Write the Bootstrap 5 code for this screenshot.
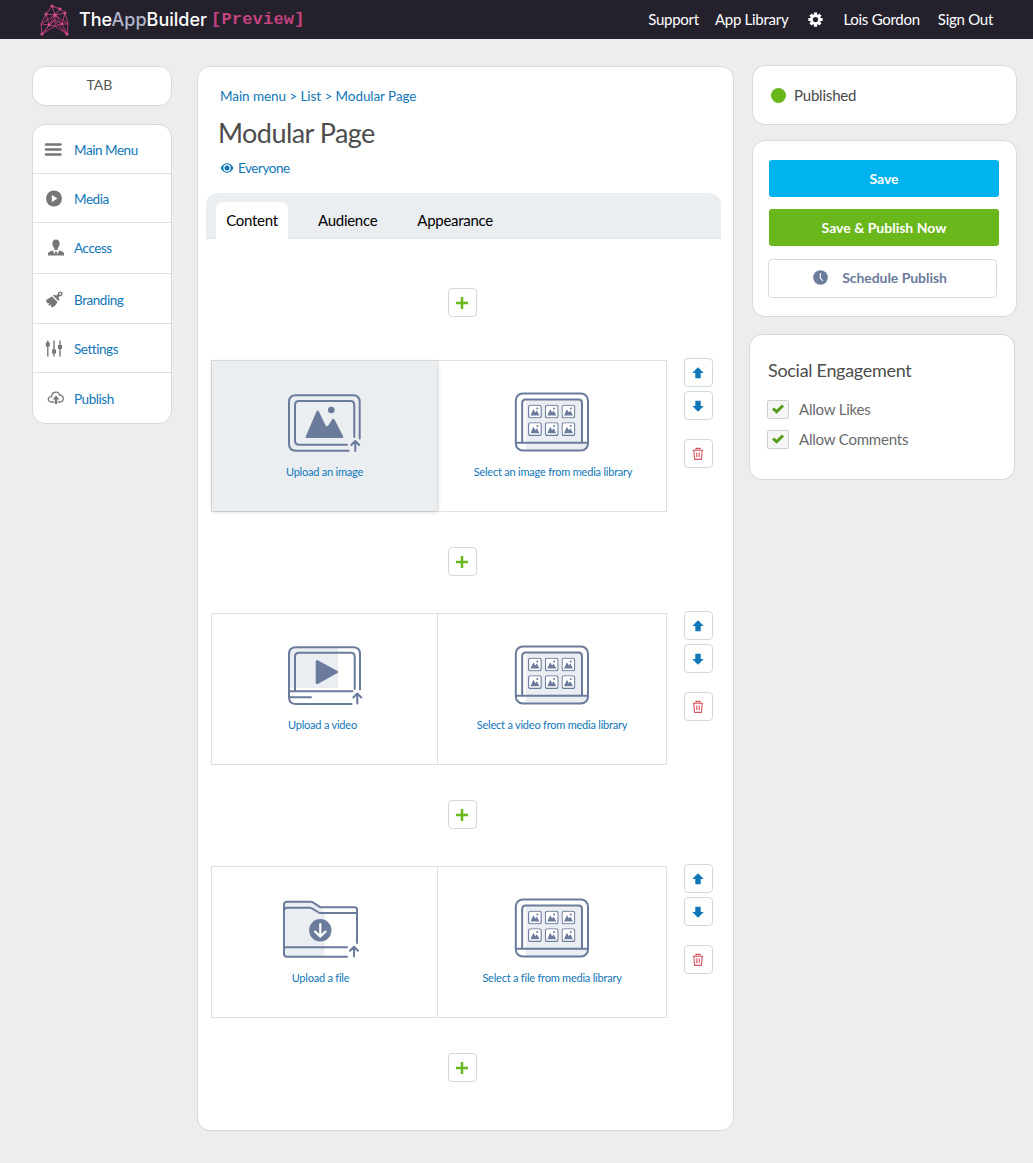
<!DOCTYPE html>
<html lang="en">
<head>
<meta charset="utf-8">
<meta name="viewport" content="width=device-width, initial-scale=1">
<title>TheAppBuilder</title>
<link href="https://cdn.jsdelivr.net/npm/bootstrap@5.3.0/dist/css/bootstrap.min.css" rel="stylesheet">
<style>
body{background:#ededed;font-family:Lato,"Liberation Sans",sans-serif;font-size:14px;line-height:20px;color:#4a4a4a;min-height:1163px}
a{text-decoration:none;color:#0f76b8}
.topbar{height:39px;background:#24212d;padding:0 40px}
.topbar a{color:#fff;font-size:15px;line-height:20px;letter-spacing:-.27px}
.topnav{margin-top:-1px}
.gear{margin:0 20px}
.brandname{font-family:Inter,sans-serif;font-weight:500;font-size:18px;letter-spacing:0;color:#fff;margin-left:9px;width:128px;white-space:nowrap}
.brandname i{font-style:normal;color:#b3b6ca}
.previewtag{font-family:"Liberation Mono",monospace;font-weight:700;font-size:17px;color:#c8427f;margin-left:4px;letter-spacing:.2px}
.panel{background:#fff;border:1px solid #d9d9d9;border-radius:13px}
.workspace{padding:26px 16px 0 32px}
.side{width:140px}
.tabcard{height:40px;padding:0 5px 2px 0;margin-top:1px;margin-bottom:18px;color:#555}
.menu{height:300px;overflow:hidden}
.menu a{display:flex;align-items:center;height:49px;padding:2px 0 0 11px;border-bottom:1px solid #dfdfdf;font-size:13.5px;letter-spacing:-.45px}
.menu a svg{width:22px;height:20px;margin-right:8px}
.menu a:nth-child(3){height:51px;padding-top:0}
.menu a:nth-child(4){height:50px}
.menu a:last-child{border:0;height:50px;padding-top:1px}
.editor{width:537px;height:1065px;margin-left:25px;margin-top:1px}
.crumbs{padding:19px 0 0 22px;font-size:13.5px;letter-spacing:-.07px}
.pagetitle{font-size:27px;line-height:34px;font-weight:400;margin:10px 0 0 20px;color:#4d4d4d;letter-spacing:-.55px}
.audience{margin:8px 0 0 22px;font-size:13.5px;letter-spacing:-.45px}
.tabstrip{height:46px;margin:15px 12px 0 8px;background:#ebeef1;border-radius:12px 12px 0 0;border-bottom:1px solid #e0e3e6;padding:9px 0 0 10px}
.tabstrip a{color:#000;font-size:15px;height:37px;line-height:37px;letter-spacing:-.28px}
.tabstrip .current{background:#fff;border-radius:7px 7px 0 0;width:72px;text-align:center;margin-right:30px}
.sq{width:29px;height:29px;border:1px solid #d3d7df;border-radius:4px;background:#fff;padding:0 1px 0 0;display:flex;align-items:center;justify-content:center}
.adder{margin:35px 0 37px 250px}
.adder.first{margin-top:49px;margin-bottom:43px}
.module{height:152px;margin-left:13px}
.choices{width:456px;height:152px;border:1px solid #e0e0e0}
.choice{padding-top:30px;font-size:11px;line-height:16px;text-align:center;letter-spacing:-.22px}
.choice svg{height:64px;display:block;margin:0 auto 9px}
.choice.up{width:226px;border-right:1px solid #e0e0e0}
.choice.up svg{width:77px}.choice.lib svg{width:78px}
.choice.lib.picklib span{margin-left:2px}
.choice.picked{background:#eaeef1;box-shadow:0 1px 4px rgba(0,0,0,.16)}
.choice.shift{padding-right:8px}
.choice.vid span{margin-right:4px}
.tools{margin:-2px 0 0 17px}
.tools .sq{margin-bottom:4px}.tools .sq:last-child{margin-top:19px}
.right{width:265px;margin-left:18px}
.status{height:60px;padding-left:18px;font-size:15px;color:#484848;margin-bottom:15px;letter-spacing:-.2px}
.status i{width:15px;height:15px;border-radius:50%;background:#6ab71c;margin-right:8px}
.actions{height:177px;padding:19px 17px 0 15px;margin-bottom:17px}
.actions .btn{display:flex;align-items:center;justify-content:center;font-size:14px;font-weight:700;border-radius:3px;padding:0;width:230px;height:37px;border:0;color:#fff;margin-left:1px;margin-bottom:12px}
.actions .save{background:#00b3ee}.actions .pub{background:#6ab71c;padding-bottom:1px}
.actions .sched{height:39px;width:229px;margin-left:0;border:1px solid #d7dae2;color:#6b7b9c;background:#fff;border-radius:4px;margin-top:13px;padding:0 5px 2px 0;letter-spacing:-.05px}
.social{width:266px;height:146px;margin-left:-3px;padding:24px 0 0 17px}
.social h2{font-size:18px;line-height:22px;font-weight:400;margin:0 0 18px 1px;color:#4d4d4d;letter-spacing:-.3px}
.opt{height:20px;margin-bottom:10px;font-size:15px;color:#6a6a6e}
.opt b{width:22px;height:19px;border:1px solid #cfcfcf;background:#f5f5f5;border-radius:2px;margin-right:10px;display:flex;align-items:center;justify-content:center}
.opt span{letter-spacing:-.2px}
.ln{fill:none;stroke:#6b7b9c;stroke-width:2;stroke-linecap:round;stroke-linejoin:round}
.sl{fill:#6b7b9c}.tint{fill:#eaedf1}
</style>
</head>
<body>
<svg width="0" height="0" class="position-absolute">
<symbol id="thumb" viewBox="0 0 14 14"><rect x=".6" y=".6" width="12.6" height="12.6" rx="2" fill="#fff" stroke="#6b7b9c" stroke-width="1.1"/><path d="M2.500 11 5.400 4.600 7.300 8 8.800 6 11.500 11z" fill="#6b7b9c"/><circle cx="9.300" cy="3.900" r="1" fill="#6b7b9c"/></symbol>
<symbol id="library" viewBox="0 0 78 64"><path class="tint" d="M13 9h56v42h6v3q-1 5-6 5H13z"/><rect class="ln" x="2.800" y="2.500" width="72.200" height="57" rx="7"/><path class="ln" d="M9.200 51V12q0-3.500 3.500-3.500h53Q69 8.500 69 12v39M3 51.700h72"/><use href="#thumb" x="15" y="13.600" width="14" height="14"/><use href="#thumb" x="31.800" y="13.600" width="14" height="14"/><use href="#thumb" x="48.500" y="13.600" width="14" height="14"/><use href="#thumb" x="15" y="31.200" width="14" height="14"/><use href="#thumb" x="31.800" y="31.200" width="14" height="14"/><use href="#thumb" x="48.500" y="31.200" width="14" height="14"/></symbol>
<symbol id="up" viewBox="0 0 14 14"><path d="M7 1.300 12.700 7H9.700v5.200H4.300V7H1.300z" fill="#0f76b8"/></symbol>
<symbol id="plus" viewBox="0 0 14 14"><path d="M7 1v12M1 7h12" stroke="#6ab71c" stroke-width="2.500" fill="none"/></symbol>
<symbol id="bin" viewBox="0 0 12 14"><path d="M.8 3.300h10.400M4 3V1.400h4V3M1.800 3.500l.8 8.900h6.800l.8-8.900M4.800 5.500v4.700M7.200 5.500v4.700" fill="none" stroke="#d9545f" stroke-width="1.100"/></symbol>
<symbol id="tick" viewBox="0 0 14 12"><path d="M2 5.500l3.600 3.300L12 2.500" fill="none" stroke="#559c1c" stroke-width="3"/></symbol>
</svg>

<header class="topbar d-flex align-items-center">
<svg width="30" height="32" viewBox="0 0 30 32" fill="none" stroke="#b73a75" stroke-width="1" class="mt-n1"><path d="M12 2 6 10 1 20 2 30 15 22 27 30 28 20 25 9 20 5zM12 2l3 9-9-1M20 5l-5 6 10-2M6 10l3 11 6-10 7 9 3-11M15 11v11M1 20l8 1 6 1 7-2 6 0M9 21 2 30M22 20l5 10M1 20l14-9 13 9M2 30l12-14 13 14M12 2l8 3M9 21l6-5 7 4"/><g fill="#d9528d" stroke="none"><circle cx="12" cy="2" r="1.500"/><circle cx="20" cy="5" r="1.500"/><circle cx="6" cy="10" r="1.500"/><circle cx="15" cy="11" r="1.700"/><circle cx="25" cy="9" r="1.400"/><circle cx="2" cy="30" r="1.600"/><circle cx="27" cy="30" r="1.600"/><circle cx="9" cy="21" r="1.300"/><circle cx="22" cy="20" r="1.300"/></g></svg>
<span class="brandname">The<i>App</i>Builder</span><span class="previewtag">[Preview]</span>
<nav class="topnav d-flex align-items-center ms-auto"><a href="#">Support</a><a href="#" class="ms-3">App Library</a>
<a href="#" class="gear d-flex"><svg width="15" height="15" viewBox="-8 -8 16 16"><g stroke="#fff" stroke-width="3.400"><path d="M0-7.600V7.600M-7.600 0H7.600M-5.300-5.300 5.300 5.300M5.300-5.300-5.300 5.300"/></g><circle r="4.200" fill="#24212d" stroke="#fff" stroke-width="2.800"/></svg></a>
<a href="#">Lois Gordon</a><a href="#" style="margin-left:18px">Sign Out</a></nav>
</header>

<main class="workspace d-flex align-items-start">
<aside class="side">
<div class="panel tabcard d-flex align-items-center justify-content-center">TAB</div>
<nav class="panel menu">
<a href="#"><svg viewBox="0 0 22 20"><path d="M2 4.500h14.500M2 9.500h14.500M2 14.500h14.500" stroke="#777" stroke-width="2.500" stroke-linecap="round"/></svg>Main Menu</a>
<a href="#"><svg viewBox="0 0 22 20"><circle cx="10" cy="9.500" r="8" fill="#777"/><path d="M7.800 6v7l5.700-3.500z" fill="#fff"/></svg>Media</a>
<a href="#"><svg viewBox="0 0 22 20"><g fill="#777"><path d="M12 1.500c4.500 0 4.500 6 1.700 8.600v2h-3.400v-2C7.500 7.500 7.500 1.500 12 1.500z"/><path d="M4 17.500v-2.300q.5-1.500 5-2.700l2 5zM20 17.500v-2.300q-.5-1.500-5-2.700l-2 5zM11.200 13.500h1.600l.8 4h-3.200z"/></g></svg>Access</a>
<a href="#"><svg viewBox="0 0 22 20"><path d="m2 10 6-3.500 5.500 5.500q-1 3-5 5.500l-1.700-1 .5-2-2 1.200-1-1.200.8-1.500-2 .2z" fill="#777"/><path d="m9 5.600 1.700-1.100 4.800 4.800-1 1.800z" fill="#777"/><path d="m12.500 7.500 3.500-3.700" stroke="#777" stroke-width="3"/><circle cx="16.300" cy="3.800" r="1.700" fill="#fff" stroke="#777" stroke-width="1.400"/></svg>Branding</a>
<a href="#"><svg viewBox="0 0 22 20"><path d="M3.800 1.500v16M10 1.500v16M16 1.500v16" stroke="#777" stroke-width="1.400"/><path d="M1.800 3.500h4v4h-4zM8 10.500h4v4H8zM14 6h4v4h-4z" fill="#777"/></svg>Settings</a>
<a href="#"><svg viewBox="0 0 22 20"><path d="M10 13H7.500C3 13 3.500 7.500 7.500 7.700 8 2 15 2 15.500 6.200c5-.5 5 6.800.5 6.800h-2" fill="none" stroke="#777" stroke-width="1.300"/><path d="M12 6.500l3.500 4h-2.300V15h-2.400v-4.500H8.500z" fill="#777"/></svg>Publish</a>
</nav>
</aside>

<section class="panel editor">
<nav class="crumbs"><a href="#">Main menu &gt; List &gt; Modular Page</a></nav>
<h1 class="pagetitle">Modular Page</h1>
<div class="audience"><a href="#" class="d-flex align-items-center"><svg width="14" height="12" viewBox="0 0 14 12" class="me-1"><path d="M.5 6C3.500-.4 10.500-.4 13.500 6c-3 6.400-10 6.400-13 0z" fill="#0f76b8"/><circle cx="7" cy="6" r="3.700" fill="#fff"/><circle cx="7" cy="6" r="2.500" fill="#0f76b8"/></svg>Everyone</a></div>
<nav class="tabstrip d-flex"><a href="#" class="current">Content</a><a href="#">Audience</a><a href="#" style="margin-left:40px">Appearance</a></nav>

<button class="sq adder first"><svg width="14" height="14"><use href="#plus"/></svg></button>
<div class="module d-flex">
<div class="choices d-flex">
<a href="#" class="choice up picked"><svg viewBox="0 0 77 64"><path class="ln" d="M73.700 47.500V11q0-6.700-6.700-6.700H10Q3 4.300 3 11v42q0 6.700 7 6.700h52.500"/><path class="ln" d="M68.300 46V14q0-4-4-4H13q-4 0-4 4v35.700q0 4 4 4h48"/><path class="sl" d="M20.500 47q-1.500-.2-.7-1.700L30.500 20.500q1.200-2 2.400 0L39.500 34.200q1.500 2 3 0l3.500-5.600q1.300-1.500 2.500 0l8.600 16.700q.5 1.600-.8 1.700z"/><circle class="sl" cx="45.300" cy="19" r="3.300"/><path class="ln" d="M69.300 60V50M65.300 54l4-4 4 4"/></svg><span>Upload an image</span></a>
<a href="#" class="choice lib picklib flex-fill"><svg><use href="#library"/></svg><span>Select an image from media library</span></a>
</div>
<div class="tools"><button class="sq"><svg width="14" height="14"><use href="#up"/></svg></button><button class="sq"><svg width="14" height="14" style="transform:rotate(180deg)"><use href="#up"/></svg></button><button class="sq"><svg width="12" height="14"><use href="#bin"/></svg></button></div>
</div>

<button class="sq adder"><svg width="14" height="14"><use href="#plus"/></svg></button>
<div class="module d-flex">
<div class="choices d-flex">
<a href="#" class="choice up vid"><svg viewBox="0 0 77 64"><path class="tint" d="M3 4h49v40H3z"/><path class="ln" d="M74 45.500V10q0-6.700-6.700-6.700H10Q3 3.300 3 10v43q0 7 7 7h55.500M3 47.300h63.500M9 47V12.500q0-3.800 4-3.800h51.700q4 0 4 3.800V45M3 53.300h22"/><path class="sl" d="M29.700 17.500q.3-1.800 2-1.200L51.500 27q1.200 1 0 2L31.700 40q-1.700.5-2-1.200z"/><path class="ln" d="M71.300 59.500V49.500M67.300 53.500l4-4 4 4"/></svg><span>Upload a video</span></a>
<a href="#" class="choice lib flex-fill"><svg><use href="#library"/></svg><span>Select a video from media library</span></a>
</div>
<div class="tools"><button class="sq"><svg width="14" height="14"><use href="#up"/></svg></button><button class="sq"><svg width="14" height="14" style="transform:rotate(180deg)"><use href="#up"/></svg></button><button class="sq"><svg width="12" height="14"><use href="#bin"/></svg></button></div>
</div>

<button class="sq adder"><svg width="14" height="14"><use href="#plus"/></svg></button>
<div class="module d-flex">
<div class="choices d-flex">
<a href="#" class="choice up shift"><svg viewBox="0 0 77 64"><path class="tint" d="M2 5h27l10 6 3.700 5v40q0 3-3 3.500H2z"/><path class="ln" d="M75 46V12.500q0-2.200-2.200-2.200H38.500L30.500 5.200Q29.700 4.700 28.500 4.700H5q-3 0-3 3v49q0 3 3 3h60M2 13.500q0-2.800 3-2.800h22.500q1.300 0 2 .5L37.500 16H75M2 50.300h63"/><circle class="sl" cx="38.300" cy="33.300" r="11.200"/><path d="M38.300 27v12M33 34.500l5.300 5 5.300-5" fill="none" stroke="#fff" stroke-width="2.200" stroke-linecap="round"/><path class="ln" d="M72 59.500V49.700M68 53.700l4-4 4 4"/></svg><span>Upload a file</span></a>
<a href="#" class="choice lib flex-fill"><svg><use href="#library"/></svg><span>Select a file from media library</span></a>
</div>
<div class="tools"><button class="sq"><svg width="14" height="14"><use href="#up"/></svg></button><button class="sq"><svg width="14" height="14" style="transform:rotate(180deg)"><use href="#up"/></svg></button><button class="sq"><svg width="12" height="14"><use href="#bin"/></svg></button></div>
</div>
<button class="sq adder"><svg width="14" height="14"><use href="#plus"/></svg></button>
</section>

<aside class="right">
<div class="panel status d-flex align-items-center"><i></i>Published</div>
<div class="panel actions">
<button class="btn save">Save</button>
<button class="btn pub">Save &amp; Publish Now</button>
<button class="btn sched"><svg width="15" height="15" viewBox="0 0 15 15" style="margin-right:14px"><circle cx="7.500" cy="7.500" r="7.300" fill="#6b7b9c"/><path d="M7.300 3v5l2.700 3" fill="none" stroke="#fff" stroke-width="1.100"/></svg>Schedule Publish</button>
</div>
<div class="panel social">
<h2>Social Engagement</h2>
<div class="opt d-flex align-items-center"><b><svg width="14" height="12"><use href="#tick"/></svg></b><span>Allow Likes</span></div>
<div class="opt d-flex align-items-center"><b><svg width="14" height="12"><use href="#tick"/></svg></b><span>Allow Comments</span></div>
</div>
</aside>
</main>
<script src="https://cdn.jsdelivr.net/npm/bootstrap@5.3.0/dist/js/bootstrap.bundle.min.js"></script>
</body>
</html>
